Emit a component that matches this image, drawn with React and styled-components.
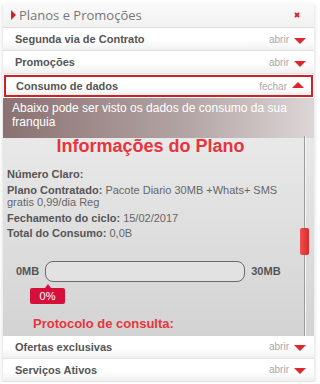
import React from 'react';
import styled, { createGlobalStyle } from 'styled-components';

const GlobalStyle = createGlobalStyle`
  html, body {
    margin: 0;
    padding: 0;
    background: #ffffff;
    font-family: "Liberation Sans", Arial, sans-serif;
  }
`;

const Panel = styled.div`
  width: 311px;
  margin: 3px 0 0 3px;
  background: #fff;
  box-shadow: 0 2px 4px rgba(0, 0, 0, 0.18);
`;

const Header = styled.div`
  height: 24px;
  display: flex;
  align-items: center;
  padding: 0 14px 0 8px;
  background: linear-gradient(#fafafa, #f1f1f1);
  border-bottom: 1px solid #dcdcdc;
`;

const HeaderArrow = styled.span`
  width: 0;
  height: 0;
  border-top: 5px solid transparent;
  border-bottom: 5px solid transparent;
  border-left: 5px solid #d3222a;
  margin-right: 3px;
`;

const HeaderTitle = styled.span`
  flex: 1;
  font-family: "Open Sans", "DejaVu Sans", sans-serif;
  font-size: 13px;
  color: #777;
`;

const Row = styled.div`
  height: ${p => (p.$open ? '18px' : '22px')};
  display: flex;
  align-items: center;
  margin: ${p => (p.$open ? '1px' : '0')};
  padding-left: ${p => (p.$open ? '10px' : '12px')};
  padding-right: ${p => (p.$open ? '7px' : '8px')};
  background: linear-gradient(#ffffff 55%, #f0f0f0);
  border-bottom: 1px solid #e3e3e3;
  border: ${p => (p.$open ? '2px solid #d01f25' : undefined)};
`;

const RowLabel = styled.span`
  flex: 1;
  font-size: 11px;
  font-weight: bold;
  color: #555;
`;

const RowAction = styled.span`
  font-size: 10px;
  color: #a8a8a8;
  margin-right: 5px;
`;

const Caret = styled.span`
  width: 0;
  height: 0;
  border-left: 6px solid transparent;
  border-right: 6px solid transparent;
  ${p =>
    p.$up
      ? 'border-bottom: 6px solid #e0262b; margin-top: -2px;'
      : 'border-top: 6px solid #e0262b; margin-top: 3px;'}
`;

const Content = styled.div`
  position: relative;
  background: linear-gradient(#ededed, #d3d3d3);
`;

const Intro = styled.div`
  height: 36px;
  padding: 3px 9px 1px;
  font-size: 12px;
  line-height: 14px;
  color: #fff;
  background: linear-gradient(to right, #8b7171, #b4a6a6 60%, #ddd6d6);
`;

const Body = styled.div`
  padding: 0 20px 5px 4px;
`;

const Title = styled.h2`
  margin: -1px 0 0;
  text-align: center;
  font-size: 18px;
  line-height: 18px;
  color: #e8343c;
`;

const InfoList = styled.div`
  margin-top: 13px;
  display: flex;
  flex-direction: column;
  gap: 3px;
`;

const InfoLine = styled.div`
  font-size: 11px;
  line-height: 12.5px;
  color: #666;

  b {
    color: #555;
  }
`;

const UsageRow = styled.div`
  margin-top: 21px;
  padding-left: 9px;
  display: flex;
  align-items: center;
  gap: 6px;
  font-size: 11px;
  font-weight: bold;
  color: #555;
`;

const Track = styled.div`
  width: 198px;
  height: 19px;
  border: 1.5px solid #6a6a6a;
  border-radius: 8px;
  background: #e2e2e2;
`;

const Badge = styled.div`
  position: relative;
  width: 35px;
  height: 16px;
  margin: 6px 0 0 23px;
  background: #d6103b;
  border-radius: 2px;
  color: #fff;
  font-size: 11px;
  line-height: 16px;
  text-align: center;

  &::before {
    content: '';
    position: absolute;
    left: 15px;
    top: -4px;
    border-left: 3px solid transparent;
    border-right: 3px solid transparent;
    border-bottom: 4px solid #d6103b;
  }
`;

const Protocol = styled.div`
  margin: 12px 0 0 26px;
  font-size: 13px;
  line-height: 15px;
  font-weight: bold;
  color: #e8343c;
`;

const ScrollLine = styled.div`
  position: absolute;
  left: 301px;
  top: 38px;
  bottom: 0;
  width: 1px;
  background: #9c9c9c;
  box-shadow: 1px 0 0 #f4f4f4;
`;

const ScrollThumb = styled.div`
  position: absolute;
  left: 297px;
  top: 130px;
  width: 9px;
  height: 27px;
  border-radius: 2px;
  background: linear-gradient(to right, #f05050, #d82a2a);
`;

const CloseIcon = () => (
  <svg width="6" height="6" viewBox="0 0 6 6">
    <path d="M1 1 L5 5 M5 1 L1 5" stroke="#d9262c" strokeWidth="2" />
  </svg>
);

const Section = ({ label, open }) => (
  <Row $open={open}>
    <RowLabel>{label}</RowLabel>
    <RowAction>{open ? 'fechar' : 'abrir'}</RowAction>
    <Caret $up={open} />
  </Row>
);

const App = () => {
  return (
    <>
      <GlobalStyle />
      <Panel>
        <Header>
          <HeaderArrow />
          <HeaderTitle>Planos e Promoções</HeaderTitle>
          <CloseIcon />
        </Header>
        <Section label="Segunda via de Contrato" />
        <Section label="Promoções" />
        <Section label="Consumo de dados" open />
        <Content>
          <Intro>Abaixo pode ser visto os dados de consumo da sua franquia</Intro>
          <Body>
            <Title>Informações do Plano</Title>
            <InfoList>
              <InfoLine><b>Número Claro:</b></InfoLine>
              <InfoLine><b>Plano Contratado:</b> Pacote Diario 30MB +Whats+ SMS gratis 0,99/dia Reg</InfoLine>
              <InfoLine><b>Fechamento do ciclo:</b> 15/02/2017</InfoLine>
              <InfoLine><b>Total do Consumo:</b> 0,0B</InfoLine>
            </InfoList>
            <UsageRow>
              <span>0MB</span>
              <Track />
              <span>30MB</span>
            </UsageRow>
            <Badge>0%</Badge>
            <Protocol>Protocolo de consulta:</Protocol>
          </Body>
          <ScrollLine />
          <ScrollThumb />
        </Content>
        <Section label="Ofertas exclusivas" />
        <Section label="Serviços Ativos" />
      </Panel>
    </>
  );
};

export default App;
